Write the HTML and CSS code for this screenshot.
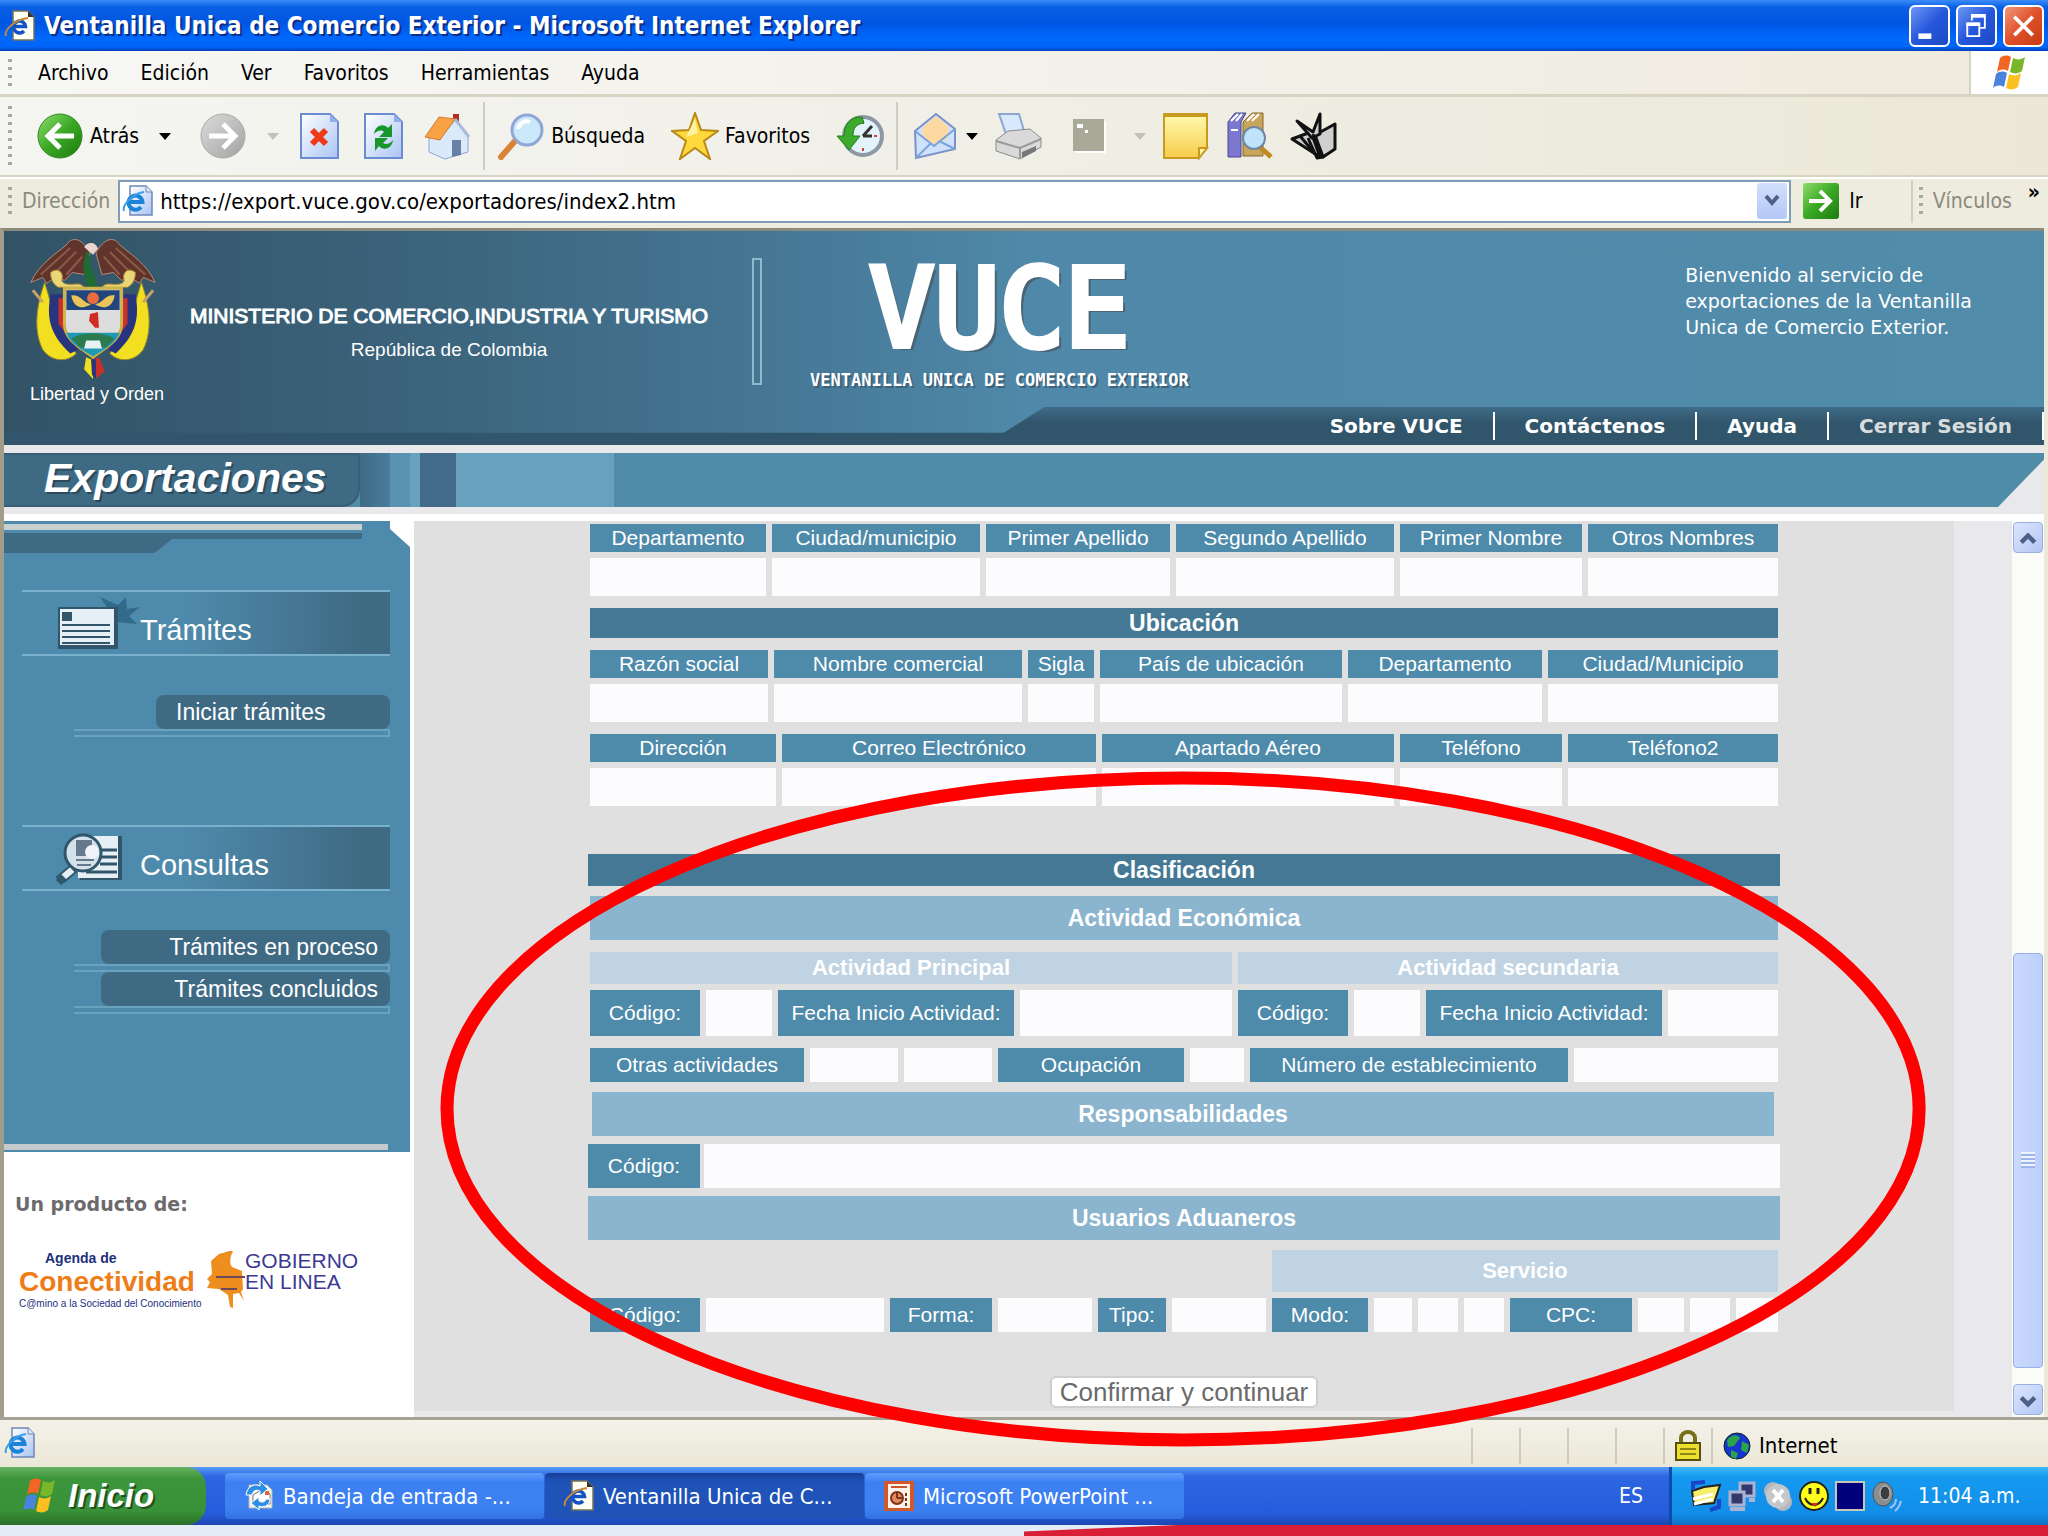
FILE: index.html
```html
<!DOCTYPE html>
<html lang="es">
<head>
    <meta charset="UTF-8">
    <meta name="viewport" content="width=device-width, initial-scale=1.0">
    <title>Ventanilla Unica de Comercio Exterior</title>
    <link rel="stylesheet" href="styles.css">
</head>
<body>
    <!-- Shared symbols -->
    <svg class="defs" aria-hidden="true">
        <defs>
            <linearGradient id="gGreen" x1="0" y1="0" x2="1" y2="1">
                <stop offset="0" stop-color="#8fdc6c"/>
                <stop offset="0.5" stop-color="#3aa824"/>
                <stop offset="1" stop-color="#1c7a10"/>
            </linearGradient>
            <linearGradient id="gGrey" x1="0" y1="0" x2="1" y2="1">
                <stop offset="0" stop-color="#dcdcdc"/>
                <stop offset="1" stop-color="#a2a2a2"/>
            </linearGradient>
            <linearGradient id="gPaper" x1="0" y1="0" x2="1" y2="1">
                <stop offset="0" stop-color="#ffffff"/>
                <stop offset="1" stop-color="#a9c4f5"/>
            </linearGradient>
            <linearGradient id="gYellow" x1="0" y1="0" x2="0" y2="1">
                <stop offset="0" stop-color="#fffbb0"/>
                <stop offset="1" stop-color="#f7cc4a"/>
            </linearGradient>
            <symbol id="iePage" viewBox="0 0 32 32">
                <path d="M8 1h16l6 6v23H8z" fill="url(#gPaper)" stroke="#6f86b8" stroke-width="1.5"/>
                <path d="M24 1v6h6" fill="#dfe8fa" stroke="#6f86b8"/>
                <path d="M19 22a7 7 0 1 1 1.5-5H7.5" fill="none" stroke="#1c84d8" stroke-width="4"/>
                <path d="M2 26C0 21 9 9 22 7" fill="none" stroke="#3aa0e8" stroke-width="2"/>
            </symbol>
            <symbol id="ieDoc" viewBox="0 0 32 32">
                <path d="M9 1h15l6 6v23H9z" fill="#fffef2" stroke="#77735a" stroke-width="1.5"/>
                <path d="M24 1v6h6z" fill="#333"/>
                <path d="M20 21a6 6 0 1 1 1.5-4.5H10" fill="none" stroke="#1252c4" stroke-width="3.5"/>
                <path d="M2 26C0 21 9 10 24 8" fill="none" stroke="#c48a3a" stroke-width="2"/>
            </symbol>
            <symbol id="flag" viewBox="0 0 40 40">
                <path d="M10 5c4-3 7-3 11-1l-3 14c-4-2-7-2-11 1z" fill="#f26522"/>
                <path d="M23 5c4 2 8 2 12-1l-3 14c-4 3-8 3-12 1z" fill="#7ab629"/>
                <path d="M6 21c4-3 7-3 11-1l-3 14c-4-2-7-2-11 1z" fill="#4a82dc"/>
                <path d="M19 21c4 2 8 2 12-1l-3 14c-4 3-8 3-12 1z" fill="#fcc020"/>
            </symbol>
        </defs>
    </svg>

    <div class="window">
        <div class="titlebar">
            <svg class="icon-sm"><use href="#ieDoc"/></svg>
            <h1 class="title">Ventanilla Unica de Comercio Exterior - Microsoft Internet Explorer</h1>
            <div class="window-buttons">
                <button class="win-btn" aria-label="Minimizar">
                    <svg viewBox="0 0 40 40"><path d="M8 28h14v6H8z" fill="#fff"/></svg>
                </button>
                <button class="win-btn" aria-label="Restaurar">
                    <svg viewBox="0 0 40 40" fill="none" stroke="#fff"><path d="M15 14V9h14v13h-5" stroke-width="2"/><path d="M14 9h16" stroke-width="4"/><path d="M10 18h13v13H10z" stroke-width="2"/><path d="M9 18h15" stroke-width="4"/></svg>
                </button>
                <button class="win-btn close" aria-label="Cerrar">
                    <svg viewBox="0 0 40 40"><path d="M10 10l20 20M30 10L10 30" stroke="#fff" stroke-width="4"/></svg>
                </button>
            </div>
        </div>

        <div class="menubar">
            <span class="grip"></span>
            <button>Archivo</button>
            <button>Edición</button>
            <button>Ver</button>
            <button>Favoritos</button>
            <button>Herramientas</button>
            <button>Ayuda</button>
            <div class="throbber"><svg class="icon-md"><use href="#flag"/></svg></div>
        </div>

        <div class="toolbar">
            <span class="grip"></span>
            <button class="tool back">
                <svg viewBox="0 0 48 48"><circle cx="24" cy="24" r="22" fill="url(#gGreen)" stroke="#2d8a1e"/><path d="M38 24H13M24 12L12 24l12 12" fill="none" stroke="#fff" stroke-width="5"/></svg>
                Atrás
            </button>
            <button class="caret back-caret" aria-label="Historial atrás"></button>
            <button class="tool" aria-label="Adelante" disabled>
                <svg viewBox="0 0 48 48"><circle cx="24" cy="24" r="22" fill="url(#gGrey)" stroke="#a8a8a8"/><path d="M10 24h25M24 12l12 12-12 12" fill="none" stroke="#fff" stroke-width="5"/></svg>
            </button>
            <button class="caret forward-caret" aria-label="Historial adelante" disabled></button>
            <button class="tool" aria-label="Detener">
                <svg viewBox="0 0 48 48"><path d="M6 2h29l8 8v36H6z" fill="url(#gPaper)" stroke="#6c8cd0" stroke-width="2"/><path d="M35 2v8h8" fill="#8fb0ee"/><path d="M17 18l14 14M31 18L17 32" stroke="#f0381a" stroke-width="6"/></svg>
            </button>
            <button class="tool" aria-label="Actualizar">
                <svg viewBox="0 0 48 48"><path d="M6 2h29l8 8v36H6z" fill="url(#gPaper)" stroke="#6c8cd0" stroke-width="2"/><path d="M35 2v8h8" fill="#8fb0ee"/><path d="M15 22c1-9 10-11 14-6l4-4v13H20l5-5c-3-3-7-1-10 2z" fill="#17962a"/><path d="M34 28c-1 9-10 11-14 6l-4 5V26h13l-5 5c3 2 7 1 10-3z" fill="#17962a"/></svg>
            </button>
            <button class="tool" aria-label="Inicio">
                <svg viewBox="0 0 48 48"><path d="M30 2h6v12h-6z" fill="#b32a20"/><path d="M19 24L32 8l13 16v16L22 47 6 40V26z" fill="#dbe9fb" stroke="#8aa6d2"/><path d="M2 25L16 5l16 2-15 21z" fill="#f8a246" stroke="#d8792a"/><path d="M32 7l14 18" stroke="#a9bbd8" stroke-width="3"/><path d="M29 28h9v15l-9 2z" fill="#6a7fa8"/></svg>
            </button>
            <span class="divider"></span>
            <button class="tool labelled">
                <svg viewBox="0 0 48 48"><path d="M4 45l14-16" stroke="#d98436" stroke-width="6" stroke-linecap="round"/><circle cx="30" cy="18" r="15" fill="#cbe8fb" stroke="#8fa7d6" stroke-width="3"/><path d="M21 17c1-6 7-9 12-7" fill="none" stroke="#fff" stroke-width="4"/></svg>
                Búsqueda
            </button>
            <button class="tool labelled">
                <svg viewBox="0 0 48 48"><path d="M24 1l6 17 17 1-14 10 6 18-15-11L9 47l6-18L1 19l17-1z" fill="#ffd93c" stroke="#b8891a" stroke-width="2"/><path d="M24 7l3 14-12 4z" fill="#fff3a0"/></svg>
                Favoritos
            </button>
            <button class="tool" aria-label="Historial">
                <svg viewBox="0 0 48 48"><circle cx="27" cy="24" r="19" fill="#e3f3fc" stroke="#8c98a4" stroke-width="4"/><path d="M27 24l9-10M27 24h9" stroke="#333" stroke-width="3"/><path d="M27 9v3M27 36v3M41 24h-3" stroke="#d4452a" stroke-width="2"/><path d="M26 5C14 4 8 13 8 24H1l12 14 11-14h-7c0-8 3-12 11-13z" fill="#3daa2c" stroke="#1f7d18"/></svg>
            </button>
            <span class="divider"></span>
            <button class="tool" aria-label="Correo">
                <svg viewBox="0 0 48 48"><path d="M5 19L26 2l19 15v20L6 46z" fill="#cfe2fb" stroke="#7d90c8" stroke-width="2"/><path d="M12 16l14-12 13 11-2 12-12 5-12-5z" fill="#fdd9a2"/><path d="M5 19l19 15L45 17M6 46l15-15M45 37L29 29" fill="none" stroke="#7ba4dc" stroke-width="2"/></svg>
            </button>
            <button class="caret tight" aria-label="Opciones de correo"></button>
            <button class="tool" aria-label="Imprimir">
                <svg viewBox="0 0 48 48"><path d="M5 2h20l6 20H12z" fill="#d8e8fd" stroke="#8ea6ce" stroke-width="2"/><path d="M2 28l12-9 22-2 11 9v9L26 47 2 39z" fill="#d9d9d9" stroke="#8c8c8c"/><path d="M2 29l24 7 21-9M26 36v10" fill="none" stroke="#9a9a9a" stroke-width="2"/><path d="M28 40l14-6v5l-14 7z" fill="#777"/></svg>
            </button>
            <button class="tool" aria-label="Edición" disabled>
                <svg viewBox="0 0 48 48"><path d="M17 9h31v32H17z" fill="#fff"/><path d="M15 7h31v32H15z" fill="#a9a999"/><path d="M19 12h6v4h-6zM27 18h3v3h-3z" fill="#fff"/></svg>
            </button>
            <button class="caret" aria-label="Más edición" disabled></button>
            <button class="tool" aria-label="Notas">
                <svg viewBox="0 0 48 48"><path d="M2 2h43v34l-8 10H2z" fill="url(#gYellow)" stroke="#c99a22" stroke-width="2"/><path d="M2 3h43" stroke="#c99a22" stroke-width="4"/><path d="M37 46V36h8z" fill="#fff3a8" stroke="#c99a22" stroke-width="2"/></svg>
            </button>
            <button class="tool" aria-label="Referencia">
                <svg viewBox="0 0 48 48"><path d="M2 10l7-9h11l-5 9v35H2z" fill="#7c78cf" stroke="#4a4690"/><path d="M17 10l9-9h11v43H17z" fill="#c7a55a" stroke="#85672a"/><path d="M5 9l7-7M10 9l6-7M21 9l7-7M26 9l7-7M5 18h7M20 18h6" stroke="#fff" stroke-width="2"/><path d="M34 35l11 10" stroke="#c08b25" stroke-width="5"/><circle cx="28" cy="26" r="11" fill="#bfe3f8" stroke="#6e86a4" stroke-width="2"/></svg>
            </button>
            <button class="tool" aria-label="Complemento">
                <svg viewBox="0 0 48 48" fill="#cfcfcf" stroke="#111" stroke-width="3" stroke-linejoin="round"><path d="M25 23l20-11v25l-12 8z"/><path d="M2 27l19-7 9 25z"/><path d="M7 9l16 11L30 2v20l-8 4z"/><path d="M23 22l10 23-6 1-9-20M10 24l16 19" fill="none"/></svg>
            </button>
        </div>

        <div class="addressbar">
            <span class="grip"></span>
            <label class="muted" for="url">Dirección</label>
            <div class="url-box">
                <svg class="icon-sm"><use href="#iePage"/></svg>
                <input type="text" id="url" value="https://export.vuce.gov.co/exportadores/index2.htm">
                <button class="url-drop" aria-label="Mostrar direcciones">
                    <svg viewBox="0 0 16 16"><path d="M2 4l6 7 6-7" fill="none" stroke="#4d6185" stroke-width="4"/></svg>
                </button>
            </div>
            <button class="go">
                <svg viewBox="0 0 36 36"><rect width="36" height="36" rx="3" fill="url(#gGreen)"/><path d="M6 18h20M17 8l10 10-10 10" fill="none" stroke="#fff" stroke-width="4"/></svg>
                Ir
            </button>
            <div class="links">
                <span class="grip"></span>
                <span class="muted">Vínculos</span>
                <span class="more">»</span>
            </div>
        </div>

        <div class="page">
            <header class="header">
                <div class="brand">
                    <div class="emblem">
                        <svg viewBox="0 0 130 144">
                            <path d="M62 14C52-4 42-1 38 6 26 16 10 26 2 44l12-5 4 6 10-7 8 4 8-8 12 2z" fill="#60342a" stroke="#b58a78"/>
                            <path d="M68 14c10-18 20-15 24-8 12 10 28 20 36 38l-12-5-4 6-10-7-8 4-8-8-12 2z" fill="#60342a" stroke="#b58a78"/>
                            <path d="M12 36L42 9M24 37l24-24M38 36L54 18M118 36L88 9M106 37L82 13M92 36L76 18" stroke="#8d5a4a" stroke-width="2"/>
                            <path d="M56 8c4-6 12-5 14 2l-5 6z" fill="#e9d7cf"/>
                            <path d="M58 12c8 6 2 14 8 22l4 16H58l-3-22z" fill="#1f6a35"/>
                            <path d="M22 34c6-5 12-2 12 5-2 5 2 7 8 7s10-2 14 3H30c-6-3-8-9-8-15zM108 34c-6-5-12-2-12 5 2 5-2 7-8 7s-10-2-14 3h26c6-3 8-9 8-15z" fill="#ead677" stroke="#a5852c"/>
                            <path d="M16 44C8 66 4 92 14 112c8 12 24 14 34 4L30 92z" fill="#f2df20" stroke="#98892c"/>
                            <path d="M114 44c8 22 12 48 2 68-8 12-24 14-34 4l18-24z" fill="#f2df20" stroke="#98892c"/>
                            <path d="M22 56c-4 22-2 40 20 60l8-4-16-20V56zM108 56c4 22 2 40-20 60l-8-4 16-20V56z" fill="#28357e"/>
                            <path d="M30 60v26l20 26 3-5-17-23V60zM100 60v26l-20 26-3-5 17-23V60z" fill="#c9302a"/>
                            <path d="M36 50h58v36c0 17-18 25-29 34C54 111 36 103 36 86z" fill="#ddd" stroke="#ceb34a" stroke-width="3"/>
                            <path d="M38 52h54v20H38z" fill="#22467c"/>
                            <path d="M43 57c10-1 12 8 20 9-8 6-18 4-20-9zM87 57c-10-1-12 8-20 9 8 6 18 4 20-9z" fill="#e9c557"/>
                            <circle cx="65" cy="60" r="6" fill="#e96c3a"/>
                            <path d="M62 76l8-2 1 16h-4l-6-7z" fill="#d22b23"/>
                            <path d="M38 95h54c-4 12-18 18-27 24-9-6-23-12-27-24z" fill="#1f9ab4"/>
                            <path d="M43 101c10-7 34-7 44 0l-9 9H52z" fill="#2c7b50"/><path d="M58 103h14l2 8H56z" fill="#e7f2f5"/>
                            <path d="M58 120l7 3v19l-9-10z" fill="#f2df20"/><path d="M65 122l6-2 6 14-10 8z" fill="#c9302a"/><path d="M63 122h5v20l-4-4z" fill="#28357e"/>
                            <path d="M4 52l10 12M126 52l-10 12" stroke="#c7a06a" stroke-width="3"/>
                        </svg>
                        <span>Libertad y Orden</span>
                    </div>
                    <div class="ministry">
                        <strong>MINISTERIO DE COMERCIO,INDUSTRIA Y TURISMO</strong>
                        <span>República de Colombia</span>
                    </div>
                    <span class="brand-bar"></span>
                    <div class="vuce">
                        <span class="vuce-name">VUCE</span>
                        <span class="vuce-sub">VENTANILLA UNICA DE COMERCIO EXTERIOR</span>
                    </div>
                    <p class="welcome">Bienvenido al servicio de<br>exportaciones de la Ventanilla<br>Unica de Comercio Exterior.</p>
                </div>
                <nav class="nav">
                    <a href="#">Sobre VUCE</a>
                    <a href="#">Contáctenos</a>
                    <a href="#">Ayuda</a>
                    <a href="#" class="dim">Cerrar Sesión</a>
                </nav>
            </header>

            <div class="banner">
                <h2>Exportaciones</h2>
                <span class="stripe s1"></span>
                <span class="stripe s2"></span>
                <span class="stripe s3"></span>
                <span class="stripe s4"></span>
                <span class="stripe s5"></span>
            </div>

            <div class="workspace">
                <aside class="sidebar">
                    <div class="side-menu">
                        <div class="side-top"></div>
                        <div class="side-tab"></div>
                        <div class="side-group">
                            <h3 class="side-head">
                                <svg viewBox="0 0 84 56">
                                    <path d="M44 2l18 8 8-8 1 12 13-2-11 9 8 8-20-2z" fill="#326a8a"/>
                                    <path d="M2 12h60v42H2z" fill="#31566c"/>
                                    <path d="M4 14h54v36H4z" fill="#e6eff5"/>
                                    <path d="M6 17h10v9H6z" fill="#31566c"/>
                                    <path d="M6 30h48M6 36h48M6 42h48M6 48h48" stroke="#31566c" stroke-width="2"/>
                                </svg>
                                <span>Trámites</span>
                            </h3>
                            <a href="#" class="side-link short">Iniciar trámites</a>
                            <span class="side-rule"></span>
                        </div>
                        <div class="side-group">
                            <h3 class="side-head">
                                <svg viewBox="0 0 84 56">
                                    <path d="M24 6h42v44H24z" fill="#31566c"/>
                                    <path d="M22 6h40v42H22z" fill="#e6eff5"/>
                                    <path d="M44 20h17M44 27h17M44 34h17M30 42h31" stroke="#31566c" stroke-width="3"/>
                                    <circle cx="27" cy="23" r="18" fill="#d3e2ea" stroke="#31566c" stroke-width="3"/>
                                    <path d="M20 10h16v16H20z" fill="#65788c"/>
                                    <circle cx="36" cy="22" r="7" fill="#eef4f7"/>
                                    <path d="M20 30h18M21 35h14" stroke="#65788c" stroke-width="2"/>
                                    <path d="M14 36l6 6-12 10-7-5z" fill="#e6eff5" stroke="#31566c" stroke-width="2"/>
                                    <path d="M5 44l6 6-6 5-5-5z" fill="#31566c"/>
                                </svg>
                                <span>Consultas</span>
                            </h3>
                            <a href="#" class="side-link">Trámites en proceso</a>
                            <span class="side-rule"></span>
                            <a href="#" class="side-link">Trámites concluidos</a>
                            <span class="side-rule"></span>
                        </div>
                        <div class="side-bottom"></div>
                    </div>
                    <div class="credits">
                        <p>Un producto de:</p>
                        <a href="#" class="logos">
                            <span class="agenda">
                                <small>Agenda de</small>
                                <b>Conectividad</b>
                                <i>C@mino a la Sociedad del Conocimiento</i>
                            </span>
                            <svg viewBox="0 0 38 58" class="map">
                                <path d="M26 1c-3 6-4 12-1 16l10 4 1 18-2 3 3 9-5-8-6 1v14l-3-1-2-12-9-6-12-1 3-6-3-3 5-5-1-13 8-7c5-1 8-3 12-3z" fill="#ee8e1e"/>
                                <path d="M9 27h29M14 39h16" stroke="#6a4a5a" stroke-width="2"/>
                            </svg>
                            <span class="gobierno">GOBIERNO<br>EN LINEA</span>
                        </a>
                    </div>
                </aside>

                <main class="content">
                    <form class="form">
                        <div class="row persona">
                            <label class="field"><span>Departamento</span><input type="text"></label>
                            <label class="field"><span>Ciudad/municipio</span><input type="text"></label>
                            <label class="field"><span>Primer Apellido</span><input type="text"></label>
                            <label class="field"><span>Segundo Apellido</span><input type="text"></label>
                            <label class="field"><span>Primer Nombre</span><input type="text"></label>
                            <label class="field"><span>Otros Nombres</span><input type="text"></label>
                        </div>

                        <h3 class="bar dark">Ubicación</h3>
                        <div class="row empresa">
                            <label class="field"><span>Razón social</span><input type="text"></label>
                            <label class="field"><span>Nombre comercial</span><input type="text"></label>
                            <label class="field"><span>Sigla</span><input type="text"></label>
                            <label class="field"><span>País de ubicación</span><input type="text"></label>
                            <label class="field"><span>Departamento</span><input type="text"></label>
                            <label class="field"><span>Ciudad/Municipio</span><input type="text"></label>
                        </div>
                        <div class="row contacto">
                            <label class="field"><span>Dirección</span><input type="text"></label>
                            <label class="field"><span>Correo Electrónico</span><input type="text"></label>
                            <label class="field"><span>Apartado Aéreo</span><input type="text"></label>
                            <label class="field"><span>Teléfono</span><input type="text"></label>
                            <label class="field"><span>Teléfono2</span><input type="text"></label>
                        </div>

                        <h3 class="bar dark wide section">Clasificación</h3>
                        <h4 class="bar mid">Actividad Económica</h4>
                        <div class="row halves">
                            <h5 class="bar light">Actividad Principal</h5>
                            <h5 class="bar light">Actividad secundaria</h5>
                        </div>
                        <div class="row actividad">
                            <label for="cod1">Código:</label><input type="text" id="cod1">
                            <label for="fecha1">Fecha Inicio Actividad:</label><input type="text" id="fecha1">
                            <label for="cod2">Código:</label><input type="text" id="cod2">
                            <label for="fecha2">Fecha Inicio Actividad:</label><input type="text" id="fecha2">
                        </div>
                        <div class="row otras">
                            <label for="otra1">Otras actividades</label><input type="text" id="otra1">
                            <input type="text" aria-label="Otras actividades 2">
                            <label for="ocup">Ocupación</label><input type="text" id="ocup">
                            <label for="numest">Número de establecimiento</label><input type="text" id="numest">
                        </div>

                        <h4 class="bar mid inset">Responsabilidades</h4>
                        <div class="row resp wide">
                            <label for="codresp">Código:</label><input type="text" id="codresp">
                        </div>

                        <h4 class="bar mid wide usuarios">Usuarios Aduaneros</h4>
                        <h5 class="bar light servicio">Servicio</h5>
                        <div class="row aduana">
                            <label for="codad">Código:</label><input type="text" id="codad">
                            <label for="forma">Forma:</label><input type="text" id="forma">
                            <label for="tipo">Tipo:</label><input type="text" id="tipo">
                            <label for="modo">Modo:</label><input type="text" id="modo">
                            <input type="text" aria-label="Modo 2">
                            <input type="text" aria-label="Modo 3">
                            <label for="cpc">CPC:</label><input type="text" id="cpc">
                            <input type="text" aria-label="CPC 2">
                            <input type="text" aria-label="CPC 3">
                        </div>

                        <button type="button" class="confirm">Confirmar y continuar</button>
                    </form>

                    <!-- Highlight around the classification section -->
                    <svg class="highlight" viewBox="0 0 1486 676" preserveAspectRatio="none" aria-hidden="true">
                        <ellipse cx="743" cy="338" rx="736" ry="331" fill="none" stroke="#ff0000" stroke-width="13"/>
                    </svg>
                </main>

                <div class="scrollbar">
                    <button class="scroll-btn" aria-label="Subir"><svg viewBox="0 0 16 16"><path d="M2 11l6-6 6 6" fill="none" stroke="#4d6185" stroke-width="4"/></svg></button>
                    <span class="track"></span>
                    <span class="thumb"></span>
                    <button class="scroll-btn" aria-label="Bajar"><svg viewBox="0 0 16 16"><path d="M2 5l6 6 6-6" fill="none" stroke="#4d6185" stroke-width="4"/></svg></button>
                </div>
            </div>
        </div>

        <div class="statusbar">
            <div class="status-main"><svg class="icon-sm"><use href="#iePage"/></svg></div>
            <span class="status-cell"></span>
            <span class="status-cell"></span>
            <span class="status-cell"></span>
            <span class="status-cell"></span>
            <span class="status-cell">
                <svg viewBox="0 0 28 32"><path d="M7 14V8a7 6 0 0 1 14 0v6" fill="none" stroke="#77701a" stroke-width="4"/><path d="M2 13h24v17H2z" fill="#ece02c" stroke="#55500f" stroke-width="2"/><path d="M6 19h16M6 24h16" stroke="#8f861c" stroke-width="2"/></svg>
            </span>
            <div class="status-zone">
                <svg viewBox="0 0 28 28"><circle cx="14" cy="14" r="13" fill="#1733d2" stroke="#122"/><path d="M4 8c4-6 11-6 13-2l-6 8-6 1zM19 9l7 4-2 8-6-3zM8 18l7 3-2 6-5-2z" fill="#2ba34a"/></svg>
                Internet
            </div>
        </div>
    </div>

    <div class="taskbar">
        <button class="start"><svg class="icon-md"><use href="#flag"/></svg>Inicio</button>
        <button class="task">
            <svg viewBox="0 0 32 32"><path d="M6 5h18l5 5v18H6z" fill="#f4f4f4" stroke="#b5b5b5"/><path d="M10 15l10-6 7 5v10H10z" fill="#fff" stroke="#777"/><path d="M22 11h4v4h-4z" fill="#e2602a"/><path d="M3 15c1-9 9-12 14-9V1l8 8-8 7v-5c-4-2-7 0-8 4zM27 19c0 7-7 9-11 7v4l-8-7 8-6v4c4 2 6 1 7-2z" fill="#2f8fe4" stroke="#fff"/></svg>
            Bandeja de entrada -...
        </button>
        <button class="task active"><svg><use href="#ieDoc"/></svg>Ventanilla Unica de C...</button>
        <button class="task">
            <svg viewBox="0 0 32 32"><path d="M1 1h30v30H1z" fill="#d0592a"/><path d="M5 4h22v24H5z" fill="#fff2ea"/><path d="M8 7h16" stroke="#c65a2c" stroke-width="2"/><circle cx="14" cy="18" r="6" fill="#e38a5c" stroke="#7e3316" stroke-width="2"/><path d="M14 18v-6M14 18h6M23 13v3M23 18v3M23 23v3" stroke="#7e3316" stroke-width="2"/></svg>
            Microsoft PowerPoint ...
        </button>
        <span class="lang">ES</span>
        <div class="tray">
            <svg viewBox="0 0 32 32"><path d="M2 11l12-4 16-2-6 18-20 2z" fill="#f5ee6a" stroke="#222" stroke-width="2"/><path d="M3 19l20-5M4 24l19-5" stroke="#fff" stroke-width="3"/><path d="M3 10V3l12-1M29 19v8l-9 3" fill="none" stroke="#1846c8" stroke-width="4"/></svg>
            <svg viewBox="0 0 32 32"><path d="M14 3h14v13H14z" fill="#33386c" stroke="#aab4d2" stroke-width="3"/><path d="M4 12h14v13H4z" fill="#33386c" stroke="#aab4d2" stroke-width="3"/><path d="M4 29h15M23 20h6" stroke="#aab4d2" stroke-width="4"/></svg>
            <svg viewBox="0 0 32 32"><circle cx="11" cy="11" r="9" fill="#b4b8bc"/><circle cx="21" cy="22" r="9" fill="#b4b8bc"/><circle cx="16" cy="16" r="12" fill="#c3c7ca"/><path d="M11 10l10 12M21 10L11 22" stroke="#fff" stroke-width="4"/></svg>
            <svg viewBox="0 0 32 32"><circle cx="16" cy="16" r="14" fill="#ffff1a" stroke="#222" stroke-width="2"/><path d="M12 8v6M20 8v6" stroke="#222" stroke-width="3"/><path d="M7 18c4 9 14 9 18 0" fill="none" stroke="#222" stroke-width="2"/><path d="M13 23h7l-3 4z" fill="#e02a1a"/></svg>
            <svg viewBox="0 0 32 32"><path d="M2 2h28v28H2z" fill="#00007c" stroke="#c8c8b8" stroke-width="2"/></svg>
            <svg viewBox="0 0 32 32"><ellipse cx="13" cy="14" rx="10" ry="12" fill="#8b8e90" stroke="#4e5154"/><ellipse cx="15" cy="13" rx="5" ry="7" fill="#3b3d40" stroke="#ccc"/><path d="M20 28c4-2 6-5 6-9M25 31c4-3 5-6 6-10" fill="none" stroke="#a5c3f2" stroke-width="2"/></svg>
            <time>11:04 a.m.</time>
        </div>
    </div>
    <div class="desktop"></div>
</body>
</html>
```

FILE: styles.css
```css
* {
    margin: 0;
    padding: 0;
    box-sizing: border-box;
}

body {
    display: flex;
    flex-direction: column;
    min-height: 100vh;
    font-family: 'DejaVu Sans Condensed', 'Open Sans', sans-serif;
    font-size: 21px;
    color: #000;
    background: #ece9d8;
    overflow-x: hidden;
}

button {
    font: inherit;
    color: inherit;
    background: none;
    border: none;
    cursor: pointer;
    white-space: nowrap;
}

input {
    font: inherit;
    border: none;
    min-width: 0;
}

input:focus {
    outline: none;
}

a {
    color: inherit;
    text-decoration: none;
}

.defs {
    position: absolute;
    width: 0;
    height: 0;
}

.icon-sm {
    width: 32px;
    height: 32px;
    flex: none;
}

.icon-md {
    width: 40px;
    height: 40px;
    flex: none;
}

/* Browser window */
.window {
    flex: 1;
    display: flex;
    flex-direction: column;
}

.titlebar {
    display: flex;
    align-items: center;
    height: 51px;
    padding: 0 4px;
    gap: 8px;
    background: linear-gradient(#3b8cf8 0, #0a60e4 14%, #0055e2 45%, #0068fc 75%, #0064f8 92%, #0040b8);
}

.title {
    flex: 1;
    font-size: 24px;
    font-weight: bold;
    color: #fff;
    text-shadow: 2px 2px #0a2f86;
}

.window-buttons {
    display: flex;
    gap: 6px;
}

.win-btn {
    width: 41px;
    height: 42px;
    border: 2px solid #fff;
    border-radius: 6px;
    background: linear-gradient(135deg, #6d97f4, #2657dc 50%, #1c49c4);
}

.win-btn.close {
    background: linear-gradient(135deg, #f0967a, #e0502a 50%, #c43c14);
}

.win-btn svg {
    display: block;
    width: 100%;
    height: 100%;
}

.grip {
    flex: none;
    width: 4px;
    height: 28px;
    background: repeating-linear-gradient(#aaa89a 0 3px, transparent 3px 8px);
}

.menubar {
    display: flex;
    align-items: center;
    height: 46px;
    padding-left: 8px;
    border-bottom: 3px solid #d8d4c4;
    background: linear-gradient(90deg, #f7f7f5, #f2f0e8 60%, #efeadd);
}

.menubar button {
    padding: 0 16px;
}

.menubar .grip + button {
    padding-left: 26px;
}

.throbber {
    display: flex;
    justify-content: center;
    align-items: center;
    align-self: stretch;
    width: 79px;
    margin-left: auto;
    border-left: 2px solid #d8d4c4;
    background: #fff;
}

.toolbar {
    display: flex;
    align-items: center;
    height: 80px;
    padding-left: 8px;
    border-bottom: 2px solid #d8d4c4;
    background: linear-gradient(90deg, #f5f5f2, #f0efe6 50%, #ebe8d8);
}

.toolbar .grip {
    height: 60px;
}

.tool {
    display: flex;
    align-items: center;
    gap: 6px;
    padding: 0 8px;
}

.tool svg {
    width: 48px;
    height: 48px;
}

.tool.back {
    padding: 0 0 0 24px;
}

.tool.labelled {
    padding-right: 18px;
}

.caret {
    padding: 16px 8px 16px 20px;
}

.caret::before {
    content: '';
    display: block;
    border: 6px solid transparent;
    border-top: 7px solid #000;
    border-bottom: 0;
}

.caret:disabled::before {
    border-top-color: #c4c2b6;
}

.caret.tight {
    padding-left: 0;
}

.caret.back-caret {
    padding-right: 20px;
}

.caret.forward-caret {
    padding-left: 12px;
}

.divider {
    width: 2px;
    height: 68px;
    margin: 0 4px;
    background: #d0cebc;
}

.addressbar {
    display: flex;
    align-items: center;
    height: 51px;
    padding: 0 0 5px 8px;
    border-top: 2px solid #fff;
    background: #eeebdf;
}

.muted {
    color: #8b8a7c;
    padding: 0 8px 0 10px;
}

.url-box {
    flex: 1;
    display: flex;
    align-items: center;
    height: 43px;
    padding: 2px;
    border: 2px solid #7f9db9;
    background: #fff;
}

.url-box input {
    flex: 1;
    height: 100%;
    padding-left: 6px;
    font-size: 22px;
    background: none;
}

.url-drop {
    width: 30px;
    height: 36px;
    border-radius: 3px;
    background: linear-gradient(#d2dffc, #b4c8f5);
}

.url-drop svg {
    width: 16px;
    height: 16px;
}

.go {
    display: flex;
    align-items: center;
    gap: 10px;
    padding: 0 48px 0 12px;
}

.go svg {
    width: 36px;
    height: 36px;
}

.links {
    display: flex;
    align-items: center;
    height: 43px;
    padding: 0 8px 0 6px;
    border-left: 2px solid #d0cebc;
}

.more {
    align-self: flex-start;
    padding-left: 8px;
    font-weight: bold;
}

/* VUCE page */
.page {
    flex: 1;
    display: flex;
    flex-direction: column;
    margin-right: 4px;
    border-top: 3px solid #8c8a7c;
    border-left: 4px solid #a29c8a;
    background: #fff;
}

.header {
    display: flex;
    flex-direction: column;
    background: linear-gradient(90deg, #325366, #3b637b 20%, #457694 37%, #4f88a8 50%, #528cab);
}

.brand {
    display: flex;
    height: 176px;
    padding-left: 22px;
    color: #fff;
}

.emblem {
    display: flex;
    flex-direction: column;
    width: 142px;
    padding-top: 8px;
    font-family: 'Liberation Sans', sans-serif;
    font-size: 18px;
    line-height: 26px;
    white-space: nowrap;
}

.emblem svg {
    width: 134px;
    height: 142px;
}

.emblem span {
    padding-left: 4px;
}

.ministry {
    display: flex;
    flex-direction: column;
    align-items: center;
    padding: 68px 0 0 22px;
    font-family: 'Liberation Sans', sans-serif;
    font-size: 19px;
    line-height: 34px;
    white-space: nowrap;
}

.ministry strong {
    font-size: 21px;
    font-weight: normal;
    -webkit-text-stroke: 1px #fff;
}

.brand-bar {
    width: 10px;
    height: 127px;
    margin: 27px 48px 0 44px;
    border: 2px solid #8fb9cd;
}

.vuce {
    display: flex;
    flex-direction: column;
    align-items: center;
    padding-top: 28px;
    font-family: 'DejaVu Sans Mono', monospace;
    white-space: nowrap;
}

.vuce-name {
    font-size: 108px;
    line-height: 100px;
    -webkit-text-stroke: 6px #fff;
    text-shadow: 5px 4px #4a6473;
}

.vuce-sub {
    font-size: 17px;
    font-weight: bold;
    line-height: 42px;
    text-shadow: 2px 2px #3e6279;
}

.welcome {
    margin-left: auto;
    padding: 31px 72px 0 0;
    font-family: 'DejaVu Sans', sans-serif;
    font-size: 19px;
    line-height: 26px;
    white-space: nowrap;
}

.nav {
    display: flex;
    justify-content: flex-end;
    align-items: center;
    height: 38px;
    font-family: 'DejaVu Sans', sans-serif;
    font-size: 20px;
    font-weight: bold;
    color: #fff;
    background: linear-gradient(#3f6c88, #31566c 40%, #31566c);
    clip-path: polygon(0 68%, 49% 68%, 51% 0, 100% 0, 100% 100%, 0 100%);
}

.nav a {
    padding: 0 30px;
    line-height: 28px;
    border-right: 2px solid #fff;
}

.nav .dim {
    color: #d9dcdd;
}

.banner {
    display: flex;
    height: 69px;
    border-top: 8px solid #e9e8ea;
    border-bottom: 7px solid #e9e8ea;
    background: #4e8ca8;
}

.banner::after {
    content: '';
    width: 46px;
    margin-left: auto;
    background: #e9e8ea;
    clip-path: polygon(100% 12%, 100% 100%, 0 100%);
}

.banner h2 {
    width: 356px;
    padding-left: 40px;
    font-family: 'Liberation Sans', sans-serif;
    font-size: 41px;
    font-style: italic;
    line-height: 46px;
    color: #fff;
    text-shadow: 2px 2px #2a4a5e;
    background: #3e6a84;
    border: 2px solid #376078;
    border-left: none;
    border-bottom-right-radius: 18px;
}

.stripe {
    flex: none;
}

.s1 {
    width: 30px;
    background: linear-gradient(90deg, #3e6a84, #4a7d9b);
}

.s2 {
    width: 20px;
    background: #5a93b2;
}

.s3 {
    width: 10px;
    background: #67a1bd;
}

.s4 {
    width: 36px;
    background: #416b88;
}

.s5 {
    width: 158px;
    background: #67a1bd;
}

.workspace {
    flex: 1;
    display: flex;
    margin-top: 7px;
}

.sidebar {
    width: 410px;
    flex: none;
}

.side-menu {
    width: 406px;
    padding: 3px 0 2px;
    background: #4e8aab;
    clip-path: polygon(0 0, 386px 0, 386px 8px, 406px 26px, 100% 100%, 0 100%);
}

.side-top {
    width: 358px;
    height: 6px;
    background: #c9d1d0;
}

.side-tab {
    width: 358px;
    height: 20px;
    margin-top: 3px;
    background: #3f6a84;
    clip-path: polygon(0 0, 100% 0, 100% 30%, 47% 30%, 42% 100%, 0 100%);
}

.side-group {
    display: flex;
    flex-direction: column;
    align-items: flex-end;
    width: 386px;
    height: 235px;
    margin-top: 37px;
}

.side-group + .side-group {
    height: 256px;
    margin-top: 0;
}

.side-head {
    display: flex;
    align-items: center;
    width: 368px;
    height: 66px;
    margin-bottom: 39px;
    padding-left: 34px;
    border-top: 2px solid #79b0cb;
    border-bottom: 2px solid #79b0cb;
    font-family: 'Liberation Sans', sans-serif;
    font-size: 29px;
    font-weight: normal;
    color: #fff;
    background: linear-gradient(90deg, #4e8aab 45%, #3f6a84 92%);
}

.side-head svg {
    width: 84px;
    height: 56px;
}

.side-head span {
    padding-top: 14px;
}

.side-link {
    width: 289px;
    height: 34px;
    padding-right: 12px;
    border-radius: 8px;
    font-family: 'Liberation Sans', sans-serif;
    font-size: 23px;
    line-height: 34px;
    text-align: right;
    color: #fff;
    background: #3f6a84;
}

.side-link.short {
    width: 234px;
    padding-left: 20px;
    text-align: left;
}

.side-rule {
    width: 316px;
    height: 8px;
    border: 2px solid #69a3c0;
    border-left: none;
}

.side-bottom {
    width: 384px;
    height: 6px;
    margin-top: 63px;
    background: #c5cacf;
}

.credits {
    padding: 40px 0 0 11px;
}

.credits p {
    font-family: 'DejaVu Sans', sans-serif;
    font-size: 19px;
    font-weight: bold;
    line-height: 24px;
    color: #6c6a6c;
}

.logos {
    display: flex;
    align-items: flex-start;
    margin-top: 34px;
}

.agenda {
    display: flex;
    flex-direction: column;
    width: 192px;
    padding-left: 4px;
    font-family: 'Liberation Sans', sans-serif;
    color: #1d2f7c;
    white-space: nowrap;
}

.agenda small {
    padding-left: 26px;
    font-size: 14px;
    font-weight: bold;
    line-height: 16px;
}

.agenda b {
    font-size: 28px;
    line-height: 32px;
    color: #ee7d18;
}

.agenda i {
    font-size: 10px;
    font-style: normal;
    line-height: 12px;
}

.map {
    width: 38px;
    height: 58px;
}

.gobierno {
    font-family: 'Liberation Sans', sans-serif;
    font-size: 21px;
    line-height: 21px;
    color: #3c3a94;
}

/* Form */
.content {
    flex: 1;
    position: relative;
    padding-right: 58px;
    padding-bottom: 6px;
    background: #e9e9eb;
}

.form {
    display: flex;
    flex-direction: column;
    gap: 12px;
    height: 100%;
    padding: 3px 176px 2px;
    background: #e0e0e1;
}

.row {
    display: grid;
    gap: 6px;
    font-family: 'Liberation Sans', sans-serif;
    font-size: 21px;
    white-space: nowrap;
}

.row input {
    width: 100%;
    height: 100%;
    padding: 0 6px;
    background: #fcfcfe;
}

.row label,
.field span {
    display: flex;
    justify-content: center;
    align-items: center;
    color: #fff;
    background: #4e8aaa;
}

.row .field {
    display: grid;
    grid-template-rows: 28px 38px;
    align-items: stretch;
    justify-content: stretch;
    gap: 6px;
    min-width: 0;
    background: none;
}

.persona {
    grid-template-columns: 176fr 208fr 184fr 218fr 182fr 190fr;
}

.empresa {
    grid-template-columns: 178fr 248fr 66fr 242fr 194fr 230fr;
}

.contacto {
    grid-template-columns: 186fr 314fr 292fr 162fr 210fr;
}

.halves {
    grid-template-columns: 642fr 540fr;
}

.actividad {
    grid-template-columns: 110fr 66fr 236fr 212fr 110fr 66fr 236fr 110fr;
    height: 46px;
    margin-top: -6px;
}

.otras {
    grid-template-columns: 214fr 88fr 88fr 186fr 54fr 318fr 204fr;
    height: 34px;
}

.resp {
    grid-template-columns: 112fr 1076fr;
    gap: 4px;
    height: 44px;
    margin-top: -4px;
}

.aduana {
    grid-template-columns: 110fr 178fr 102fr 94fr 68fr 94fr 96fr 38fr 40fr 40fr 122fr 46fr 40fr 42fr;
    height: 34px;
    margin-top: -6px;
}

.bar {
    font-family: 'Liberation Sans', sans-serif;
    font-size: 23px;
    line-height: 30px;
    text-align: center;
    color: #fff;
}

.dark {
    background: #447894;
}

.section {
    margin-top: 36px;
    line-height: 32px;
}

.mid {
    margin-top: -2px;
    line-height: 44px;
    background: #8bb4ce;
}

.light {
    font-size: 22px;
    line-height: 32px;
    background: #c0d3e2;
}

.wide {
    margin-left: -2px;
    margin-right: -2px;
}

.inset {
    margin-left: 2px;
    margin-right: 4px;
}

.usuarios {
    margin-top: -4px;
}

.servicio {
    width: 506px;
    margin-top: -2px;
    align-self: flex-end;
    line-height: 42px;
}

.confirm {
    align-self: center;
    height: 32px;
    margin-top: 32px;
    padding: 0 8px;
    border: 2px solid #cfcfd1;
    border-radius: 6px;
    font-family: 'Liberation Sans', sans-serif;
    font-size: 26px;
    line-height: 28px;
    color: #6a6a6a;
    background: #fff;
}

.highlight {
    position: absolute;
    z-index: 1;
    left: 1.6%;
    top: 250px;
    width: 93%;
    height: 676px;
    pointer-events: none;
}

.scrollbar {
    display: flex;
    flex-direction: column;
    width: 32px;
    padding: 1px 1px 2px;
    background: #fbfbf7;
}

.scroll-btn {
    height: 31px;
    border: 1px solid #9ab0e0;
    border-radius: 4px;
    background: linear-gradient(135deg, #dbe5fd, #b3c6f5);
}

.scroll-btn svg {
    width: 18px;
    height: 18px;
    vertical-align: middle;
}

.track {
    flex: 401;
}

.thumb {
    flex: 415;
    margin-bottom: 16px;
    border: 1px solid #98b0e8;
    border-radius: 4px;
    background:
        repeating-linear-gradient(#eef3ff 0 2px, #9db5ec 2px 4px) center / 14px 16px no-repeat,
        linear-gradient(90deg, #cbd9fd, #bccffa);
}

/* Status bar and taskbar */
.statusbar {
    display: flex;
    align-items: center;
    height: 50px;
    padding: 6px 0 2px;
    border-top: 3px solid #a5a394;
    background: linear-gradient(#f4f2e8, #ebe8d8);
}

.status-main {
    flex: 1;
    padding-left: 4px;
}

.status-cell,
.status-zone {
    display: flex;
    align-items: center;
    justify-content: center;
    width: 48px;
    height: 36px;
    border-left: 2px solid #cfccbc;
}

.status-cell svg {
    width: 28px;
    height: 32px;
}

.status-zone {
    justify-content: flex-start;
    gap: 8px;
    width: 337px;
    padding-left: 10px;
    font-size: 22px;
}

.status-zone svg {
    width: 28px;
    height: 28px;
}

.taskbar {
    display: flex;
    align-items: center;
    height: 58px;
    color: #fff;
    background: linear-gradient(#5a9cf6, #2c66e0 16%, #265cdc 80%, #1c46b4);
}

.start {
    display: flex;
    align-items: center;
    gap: 8px;
    width: 206px;
    height: 58px;
    margin-right: 19px;
    padding-left: 20px;
    border-radius: 0 20px 20px 0;
    font-family: 'Liberation Sans', sans-serif;
    font-size: 33px;
    font-style: italic;
    font-weight: bold;
    text-shadow: 2px 2px #22501f;
    background: linear-gradient(#67b162, #3c953a 20%, #3a9238 75%, #2a7029);
}

.task {
    display: flex;
    align-items: center;
    gap: 8px;
    width: 319px;
    height: 46px;
    margin-right: 1px;
    padding-left: 18px;
    border-radius: 4px;
    font-size: 22px;
    background: linear-gradient(#5f9cfa, #3c80f2 20%, #3c80f2 80%, #3470de);
}

.task.active {
    background: linear-gradient(#173f98, #1f53b8 20%, #1f53b8);
}

.task svg {
    width: 32px;
    height: 32px;
}

.lang {
    margin-left: auto;
    padding-right: 26px;
}

.tray {
    display: flex;
    align-items: center;
    gap: 4px;
    width: 379px;
    height: 58px;
    padding-left: 18px;
    border-left: 3px solid #0a4ca8;
    background: linear-gradient(#3cbcf8, #159af0 16%, #128ee8 80%, #1070c4);
}

.tray svg {
    width: 32px;
    height: 32px;
}

.tray time {
    padding-left: 12px;
}

.desktop {
    display: flex;
    justify-content: flex-end;
    height: 11px;
    background: #e2edf8;
}

.desktop::after {
    content: '';
    width: 50%;
    background: #d81f36;
    clip-path: polygon(0 60%, 15% 0, 100% 0, 100% 100%, 0 100%);
}
```
